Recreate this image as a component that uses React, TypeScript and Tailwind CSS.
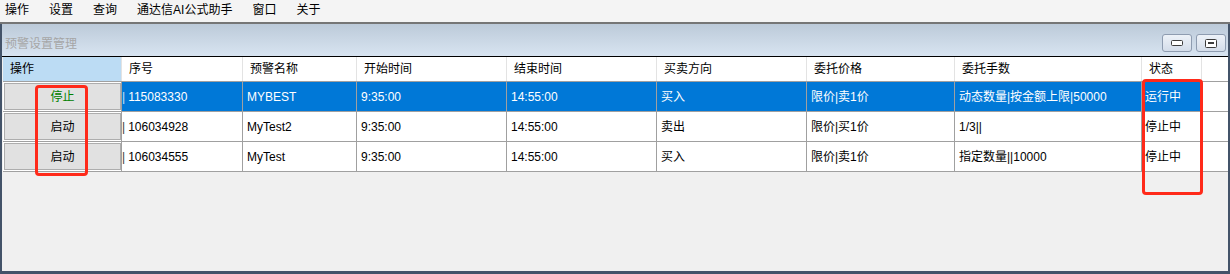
import React from "react";

interface AlertRow {
  running: boolean;
  id: string;
  name: string;
  start: string;
  end: string;
  side: string;
  price: string;
  qty: string;
  status: string;
}

const ROWS: AlertRow[] = [
  {
    running: true,
    id: "115083330",
    name: "MYBEST",
    start: "9:35:00",
    end: "14:55:00",
    side: "买入",
    price: "限价|卖1价",
    qty: "动态数量|按金额上限|50000",
    status: "运行中",
  },
  {
    running: false,
    id: "106034928",
    name: "MyTest2",
    start: "9:35:00",
    end: "14:55:00",
    side: "卖出",
    price: "限价|买1价",
    qty: "1/3||",
    status: "停止中",
  },
  {
    running: false,
    id: "106034555",
    name: "MyTest",
    start: "9:35:00",
    end: "14:55:00",
    side: "买入",
    price: "限价|卖1价",
    qty: "指定数量||10000",
    status: "停止中",
  },
];

const MENU = ["操作", "设置", "查询", "通达信AI公式助手", "窗口", "关于"];

// column widths incl. the 1px right line
const COLS = [
  { label: "操作", w: "w-[119px]" },
  { label: "序号", w: "w-[121px]" },
  { label: "预警名称", w: "w-[114px]" },
  { label: "开始时间", w: "w-[150px]" },
  { label: "结束时间", w: "w-[150px]" },
  { label: "买卖方向", w: "w-[150px]" },
  { label: "委托价格", w: "w-[148px]" },
  { label: "委托手数", w: "w-[187px]" },
  { label: "状态", w: "w-[60px]" },
];

function TitleButton({ kind }: { kind: "min" | "restore" }) {
  return (
    <button className="flex h-[18px] w-[30px] items-center justify-center rounded-[3px] border border-[#8e9cb0] bg-gradient-to-b from-[#edf2f8] to-[#d4ddea]">
      {kind === "min" ? (
        <svg width="12" height="6" viewBox="0 0 12 6">
          <rect x="0.5" y="0.5" width="11" height="5" rx="1" fill="#fff" stroke="#3c3c3c" />
        </svg>
      ) : (
        <svg width="12" height="9" viewBox="0 0 12 9">
          <rect x="0.5" y="0.5" width="11" height="8" rx="1" fill="#fff" stroke="#3c3c3c" />
          <rect x="3" y="3" width="6" height="2" fill="#3c3c3c" />
        </svg>
      )}
    </button>
  );
}

function DataRow({ row }: { row: AlertRow }) {
  const sel = row.running;
  const cell = `flex h-full items-center border-r border-[#a0a0a0] pl-[4px] whitespace-nowrap ${
    sel ? "bg-[#0078d7] text-white" : "bg-white text-black"
  }`;
  return (
    <div className="flex h-[30px] border-b border-[#a0a0a0] bg-white">
      <div className="flex h-full w-[119px] items-center border-r border-[#a0a0a0] bg-white py-px pl-px pr-0">
        <button
          className={`flex h-full w-full items-center justify-center border border-[#adadad] bg-[#e1e1e1] ${
            sel ? "text-[#008000]" : "text-black"
          }`}
        >
          {row.running ? "停止" : "启动"}
        </button>
      </div>
      <div className={`${cell} w-[121px] !pl-0`}>
        <span className="mr-[3px] opacity-80">|</span>
        {row.id}
      </div>
      <div className={`${cell} w-[114px]`}>{row.name}</div>
      <div className={`${cell} w-[150px]`}>{row.start}</div>
      <div className={`${cell} w-[150px]`}>{row.end}</div>
      <div className={`${cell} w-[150px]`}>{row.side}</div>
      <div className={`${cell} w-[148px]`}>{row.price}</div>
      <div className={`${cell} w-[187px]`}>{row.qty}</div>
      <div className={`${cell} w-[60px] !pl-[3px]`}>{row.status}</div>
      <div className="h-full flex-1 bg-white" />
    </div>
  );
}

export default function App() {
  return (
    <div
      className="relative flex h-[274px] w-[1230px] flex-col overflow-hidden bg-[#f0f0f0] text-[12px] text-black"
      style={{ fontFamily: '"Liberation Sans", "Noto Sans CJK SC", sans-serif' }}
    >
      {/* menu bar */}
      <div className="flex h-[24px] shrink-0 items-center gap-[20px] border-b-2 border-[#767676] bg-[#f4f4f4] pb-[2px] pl-[5px]">
        {MENU.map((m) => (
          <span key={m}>{m}</span>
        ))}
      </div>

      {/* mdi child window */}
      <div className="flex flex-1 flex-col border-x-2 border-b-[3px] border-[#435369] bg-[#f0f0f0]">
        <div className="flex h-[33px] shrink-0 items-start justify-between border-b border-black bg-gradient-to-b from-[#bccad9] to-[#d8e4f1] pl-[3px] pr-[2px]">
          <span className="mt-[11px] text-[#a6a6a6]">预警设置管理</span>
          <div className="mt-[10px] flex gap-[4px]">
            <TitleButton kind="min" />
            <TitleButton kind="restore" />
          </div>
        </div>

        <div className="pl-px">
          {/* header */}
          <div className="flex h-[25px] border-b border-[#a0a0a0] bg-white">
            {COLS.map((c, i) => (
              <div
                key={c.label}
                className={`flex h-full items-center border-r border-[#e3e3e3] pl-[7px] ${c.w} ${
                  i === 0 ? "bg-[#bcdcf4]" : ""
                }`}
              >
                {c.label}
              </div>
            ))}
            <div className="h-full flex-1" />
          </div>
          {ROWS.map((r) => (
            <DataRow key={r.id} row={r} />
          ))}
        </div>
      </div>

      {/* red annotation boxes */}
      <div className="pointer-events-none absolute left-[35px] top-[85px] h-[91px] w-[53px] rounded-[4px] border-[3px] border-[#ff2a1a]" />
      <div className="pointer-events-none absolute left-[1142px] top-[79px] h-[116px] w-[61px] rounded-[4px] border-[3px] border-[#ff2a1a]" />
    </div>
  );
}
